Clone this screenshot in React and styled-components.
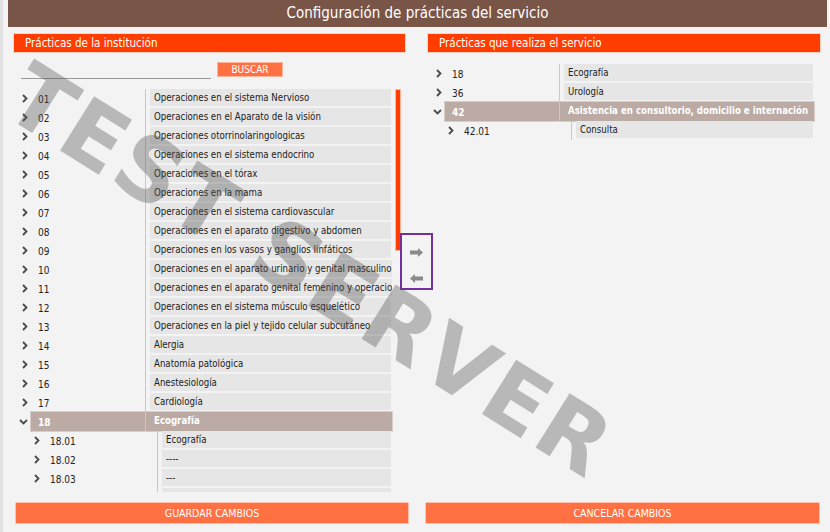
import React from 'react';
import styled, { createGlobalStyle } from 'styled-components';

const GlobalStyle = createGlobalStyle`
  html, body {
    margin: 0;
    padding: 0;
    background: #f3f3f3;
  }
  body {
    font-family: 'DejaVu Sans Condensed', 'DejaVu Sans', sans-serif;
    color: #222222;
  }
`;

const institucion = [
  { code: '01', name: 'Operaciones en el sistema Nervioso' },
  { code: '02', name: 'Operaciones en el Aparato de la visión' },
  { code: '03', name: 'Operaciones otorrinolaringologicas' },
  { code: '04', name: 'Operaciones en el sistema endocrino' },
  { code: '05', name: 'Operaciones en el tórax' },
  { code: '06', name: 'Operaciones en la mama' },
  { code: '07', name: 'Operaciones en el sistema cardiovascular' },
  { code: '08', name: 'Operaciones en el aparato digestivo y abdomen' },
  { code: '09', name: 'Operaciones en los vasos y ganglios linfáticos' },
  { code: '10', name: 'Operaciones en el aparato urinario y genital masculino' },
  { code: '11', name: 'Operaciones en el aparato genital femenino y operacio' },
  { code: '12', name: 'Operaciones en el sistema músculo esquelético' },
  { code: '13', name: 'Operaciones en la piel y tejido celular subcutáneo' },
  { code: '14', name: 'Alergia' },
  { code: '15', name: 'Anatomía patológica' },
  { code: '16', name: 'Anestesiología' },
  { code: '17', name: 'Cardiología' },
  {
    code: '18',
    name: 'Ecografía',
    open: true,
    children: [
      { code: '18.01', name: 'Ecografía' },
      { code: '18.02', name: '----' },
      { code: '18.03', name: '---' },
      { code: '', name: '' },
    ],
  },
];

const servicio = [
  { code: '18', name: 'Ecografía' },
  { code: '36', name: 'Urología' },
  {
    code: '42',
    name: 'Asistencia en consultorio, domicilio e internación',
    open: true,
    children: [{ code: '42.01', name: 'Consulta' }],
  },
];

const Page = styled.div`
  position: relative;
  width: 830px;
  height: 532px;
  overflow: hidden;
  border-left: 3px solid #e0e0e0;
  box-sizing: border-box;
`;

const TitleBar = styled.div`
  height: 27px;
  margin: 0 3px 0 5px;
  background: #795548;
  color: #ffffff;
  font-size: 15px;
  line-height: 27px;
  text-align: center;
`;

const Columns = styled.div`
  display: flex;
  padding: 7px 0 0 11px;
`;

const Panel = styled.div`
  flex: none;
  width: ${({ $width }) => $width}px;
  margin-left: ${({ $gap }) => $gap || 0}px;
`;

const PanelHeader = styled.div`
  height: 18px;
  background: #ff3d00;
  color: #ffffff;
  font-size: 11.5px;
  line-height: 18px;
  padding-left: 11px;
  box-shadow: 0 0 0 1px #ffd3c4;
`;

const SearchRow = styled.div`
  display: flex;
  align-items: flex-start;
  gap: 6px;
  height: 37px;
  padding: 10px 0 0 7px;
  box-sizing: border-box;
`;

const SearchInput = styled.input`
  width: 190px;
  height: 16px;
  border: none;
  border-bottom: 1px solid #9a9a9a;
  background: transparent;
  outline: none;
  padding: 0;
`;

const SmallButton = styled.button`
  width: 66px;
  height: 15px;
  padding: 0;
  border: 1px solid #ffb49c;
  background: #ff7043;
  color: #ffffff;
  font-family: inherit;
  font-size: 10px;
  line-height: 13px;
`;

const ListArea = styled.div`
  display: flex;
  align-items: flex-start;
`;

const Tree = styled.div`
  flex: none;
  width: ${({ $width }) => $width}px;
  height: ${({ $height }) => ($height ? `${$height}px` : 'auto')};
  overflow: hidden;
  padding-top: ${({ $top }) => $top}px;
`;

const Row = styled.div`
  display: flex;
  align-items: stretch;
  height: 19px;
  padding-left: ${({ $level }) => $level * 12}px;
  font-size: 9.6px;
`;

const Toggle = styled.div`
  flex: none;
  width: 17px;
  display: flex;
  align-items: center;
  padding-left: ${({ $open }) => ($open ? 5 : 8)}px;
  box-sizing: border-box;
`;

const RowBody = styled.div`
  flex: 1;
  display: flex;
  align-items: stretch;
  margin-right: ${({ $right }) => $right}px;
  background: ${({ $selected }) => ($selected ? '#bcaaa4' : 'transparent')};
  box-shadow: ${({ $selected }) => ($selected ? '0 0 0 1px #d9cdc9' : 'none')};
  color: ${({ $selected }) => ($selected ? '#ffffff' : '#222222')};
  font-weight: ${({ $selected }) => ($selected ? 'bold' : 'normal')};
`;

const Code = styled.div`
  flex: none;
  width: 107px;
  padding-left: 7px;
  border-right: 1px solid #c8c8c8;
  display: flex;
  align-items: center;
  padding-top: 1px;
  font-size: 10px;
`;

const Cell = styled.div`
  flex: 1;
  min-width: 0;
  margin: 0 1px 2px 4px;
  padding-left: 4px;
  background: ${({ $selected }) => ($selected ? 'transparent' : '#e6e6e6')};
  white-space: nowrap;
  overflow: hidden;
  line-height: 17px;
`;

const ScrollTrack = styled.div`
  flex: none;
  width: 4px;
  height: 403px;
  margin-top: 1px;
`;

const ScrollThumb = styled.div`
  height: 160px;
  background: #ff3d00;
  box-shadow: 0 0 0 1px #ffb49c;
`;

const MoveBox = styled.div`
  flex: none;
  width: 29px;
  height: 36px;
  margin-top: 144px;
  border: 2px solid #7030a0;
  display: flex;
  flex-direction: column;
  align-items: center;
  justify-content: space-between;
  padding: 12px 0 5px;
`;

const ArrowButton = styled.div`
  width: 14px;
  height: 10px;
  display: flex;
  align-items: center;
  justify-content: center;
`;

const Footer = styled.div`
  position: absolute;
  left: 12px;
  right: 7px;
  top: 502px;
  display: flex;
  gap: 16px;
`;

const WideButton = styled.button`
  width: ${({ $width }) => $width}px;
  height: 22px;
  padding: 0;
  border: 1px solid #ffc1ad;
  border-radius: 1px;
  background: #ff7043;
  color: #ffffff;
  font-family: inherit;
  font-size: 10.5px;
`;

const Watermark = styled.div`
  position: absolute;
  left: 36px;
  top: 50px;
  transform: rotate(32deg);
  transform-origin: 0 0;
  font-family: 'DejaVu Sans', sans-serif;
  font-weight: bold;
  font-size: 88px;
  line-height: 1;
  letter-spacing: 3px;
  color: rgba(80, 80, 80, 0.36);
  white-space: nowrap;
  pointer-events: none;
`;

const Chevron = ({ open }) =>
  open ? (
    <svg width="9" height="6" viewBox="0 0 9 6">
      <path d="M1 1 L4.5 4.5 L8 1" fill="none" stroke="#4a4a4a" strokeWidth="1.8" />
    </svg>
  ) : (
    <svg width="6" height="9" viewBox="0 0 6 9">
      <path d="M1 1 L4.5 4.5 L1 8" fill="none" stroke="#4a4a4a" strokeWidth="1.8" />
    </svg>
  );

const TreeRows = ({ items, level = 0, right }) =>
  items.map((item, i) => (
    <React.Fragment key={item.code || `empty-${i}`}>
      <Row $level={level}>
        <Toggle $open={item.open}>
          {item.code && <Chevron open={item.open} />}
        </Toggle>
        <RowBody $selected={item.open} $right={right}>
          <Code>{item.code}</Code>
          <Cell $selected={item.open}>{item.name}</Cell>
        </RowBody>
      </Row>
      {item.open && item.children && (
        <TreeRows items={item.children} level={level + 1} right={right} />
      )}
    </React.Fragment>
  ));

const Arrow = ({ left }) => (
  <svg width="13" height="9" viewBox="0 0 13 9">
    <path
      d={left ? 'M0 4.5 L5 0 L5 2.5 L13 2.5 L13 6.5 L5 6.5 L5 9 Z' : 'M13 4.5 L8 0 L8 2.5 L0 2.5 L0 6.5 L8 6.5 L8 9 Z'}
      fill="#8a8a8a"
    />
  </svg>
);

export default function App() {
  return (
    <>
      <GlobalStyle />
      <Page>
        <TitleBar>Configuración de prácticas del servicio</TitleBar>
        <Columns>
          <Panel $width={391}>
            <PanelHeader>Prácticas de la institución</PanelHeader>
            <SearchRow>
              <SearchInput type="text" />
              <SmallButton>BUSCAR</SmallButton>
            </SearchRow>
            <ListArea>
              <Tree $width={382} $height={403} $top={0}>
                <TreeRows items={institucion} right={4} />
              </Tree>
              <ScrollTrack>
                <ScrollThumb />
              </ScrollTrack>
              <MoveBox>
                <ArrowButton>
                  <Arrow />
                </ArrowButton>
                <ArrowButton>
                  <Arrow left />
                </ArrowButton>
              </MoveBox>
            </ListArea>
          </Panel>
          <Panel $width={392} $gap={23}>
            <PanelHeader>Prácticas que realiza el servicio</PanelHeader>
            <Tree $width={392} $top={12}>
              <TreeRows items={servicio} right={6} />
            </Tree>
          </Panel>
        </Columns>
        <Footer>
          <WideButton $width={394}>GUARDAR CAMBIOS</WideButton>
          <WideButton $width={395}>CANCELAR CAMBIOS</WideButton>
        </Footer>
        <Watermark>TEST SERVER</Watermark>
      </Page>
    </>
  );
}
